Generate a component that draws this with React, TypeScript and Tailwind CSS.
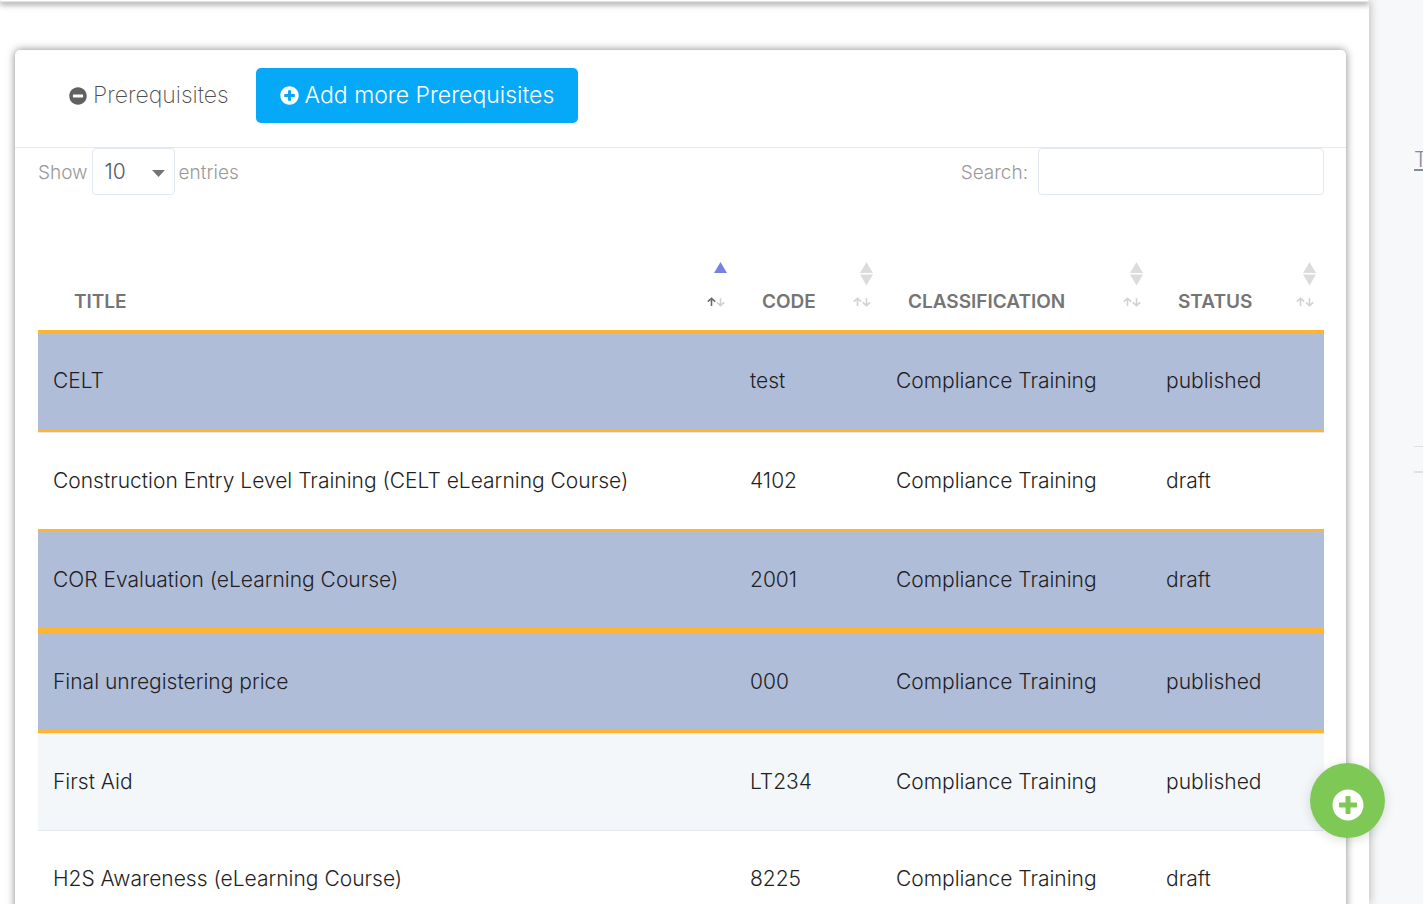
import { FaMinusCircle, FaPlusCircle } from "react-icons/fa";

type Course = {
  title: string;
  code: string;
  classification: string;
  status: string;
  selected?: boolean;
};

const courses: Course[] = [
  { title: "CELT", code: "test", classification: "Compliance Training", status: "published", selected: true },
  { title: "Construction Entry Level Training (CELT eLearning Course)", code: "4102", classification: "Compliance Training", status: "draft" },
  { title: "COR Evaluation (eLearning Course)", code: "2001", classification: "Compliance Training", status: "draft", selected: true },
  { title: "Final unregistering price", code: "000", classification: "Compliance Training", status: "published", selected: true },
  { title: "First Aid", code: "LT234", classification: "Compliance Training", status: "published" },
  { title: "H2S Awareness (eLearning Course)", code: "8225", classification: "Compliance Training", status: "draft" },
];

const columns = [
  { label: "Title", width: "", pad: "pl-9", sorted: true },
  { label: "Code", width: "w-[146px]", pad: "pl-[27px]", sorted: false },
  { label: "Classification", width: "w-[270px]", pad: "pl-[27px]", sorted: false },
  { label: "Status", width: "w-[173px]", pad: "pl-[27px]", sorted: false },
];

function SortMarks({ sorted }: { sorted: boolean }) {
  return (
    <span className="flex flex-col items-end gap-2">
      <svg width="13" height="24" viewBox="0 0 13 24" aria-hidden="true">
        <path d="M6.5 0L13 11H0z" fill={sorted ? "#7b80e0" : "#dcdcdc"} />
        {!sorted && <path d="M0 12.5h13L6.5 23.5z" fill="#dcdcdc" />}
      </svg>
      <span className="pr-[2px]">
        <svg width="18" height="16" viewBox="0 0 18 16" fill="none" strokeWidth="1.6" aria-hidden="true">
          <path d="M4.5 12V4.5M0.8 7.6L4.5 4.4L8.2 7.6" stroke={sorted ? "#6b6b6b" : "#d2d2d2"} />
          <path d="M13.5 4V11.5M9.8 8.4L13.5 11.6L17.2 8.4" stroke="#d2d2d2" />
        </svg>
      </span>
    </span>
  );
}

function rowStyle(course: Course, index: number) {
  if (course.selected) return "border-y-[3px] border-[#ffb52e] bg-[#b0bdd9]";
  return index % 2 === 0 ? "border-t border-[#e3e8ee] bg-[#f3f7fa]" : "border-t border-[#e3e8ee] bg-white";
}

export default function App() {
  return (
    <div className="flex h-screen overflow-hidden bg-[#f7f8fa] font-['Inter','Noto_Sans',sans-serif] font-light">
      <main className="z-10 min-w-0 flex-1 overflow-hidden bg-white shadow-[0_0_10px_rgba(0,0,0,0.3)]">
        <section className="h-[2px] rounded-b-md border-b border-[#dfe5ec] bg-white shadow-[0_1px_6px_1px_rgba(0,0,0,0.5)]" />
        <section className="mt-12 mr-[23px] ml-[15px] rounded-[5px] bg-white shadow-[0_0_8px_rgba(0,0,0,0.48)]">
          <header className="flex items-start gap-[3px] border-b border-[#e3e8ec] pt-[18px] pb-6 pl-[30px]">
            <button type="button" className="flex h-[55px] items-center gap-[6px] px-6 text-[23px] font-extralight text-[#4f4f4f]">
              <FaMinusCircle size={18} color="#616161" />
              Prerequisites
            </button>
            <button type="button" className="flex h-[55px] items-center gap-[6px] rounded-[5px] bg-[#06a9f8] px-6 text-[23px] text-white">
              <FaPlusCircle size={19} />
              Add more Prerequisites
            </button>
          </header>
          <div className="pr-[22px] pl-[23px]">
            <div className="flex items-center justify-between text-[19px] text-[#999999]">
              <label className="flex items-center gap-1">
                <span className="pt-[3px]">Show</span>
                <span className="relative">
                  <select className="h-[47px] w-[83px] appearance-none rounded-[4px] border border-[#e1e8ef] bg-white pl-3 text-[21px] text-[#4f5a68]">
                    <option>10</option>
                    <option>25</option>
                    <option>50</option>
                  </select>
                  <svg className="pointer-events-none absolute top-[22px] right-[10px]" width="13" height="7" viewBox="0 0 13 7" aria-hidden="true">
                    <path d="M0 0h13L6.5 7z" fill="#757575" />
                  </svg>
                </span>
                <span className="pt-[3px]">entries</span>
              </label>
              <label className="flex items-center gap-[10px]">
                <span className="pt-[3px]">Search:</span>
                <input type="search" className="h-[47px] w-[286px] rounded-[4px] border border-[#e1e8ef] bg-white px-3 outline-none" />
              </label>
            </div>
            <table className="mt-[67px] w-full table-fixed border-separate border-spacing-0 text-left">
              <thead>
                <tr>
                  {columns.map((c) => (
                    <th key={c.label} scope="col" className={`${c.width} ${c.pad} p-0 pb-5 text-[19px] leading-4 font-semibold text-[#757575]`}>
                      <button type="button" className="flex w-full items-end justify-between pr-2 text-left uppercase">
                        {c.label}
                        <SortMarks sorted={c.sorted} />
                      </button>
                    </th>
                  ))}
                </tr>
              </thead>
              <tbody>
                {courses.map((course, i) => (
                  <tr key={course.code} className="text-[21px] leading-6 whitespace-nowrap text-[#1f1f24]">
                    {[course.title, course.code, course.classification, course.status].map((text, n) => (
                      <td key={n} className={`${rowStyle(course, i)} px-[15px] py-9`}>
                        {text}
                      </td>
                    ))}
                  </tr>
                ))}
              </tbody>
            </table>
          </div>
        </section>
      </main>
      <aside className="w-[54px] shrink-0 overflow-hidden pt-[146px] pl-[45px]">
        <a href="#" className="block text-[21px] leading-7 text-[#7f8d9c] underline decoration-2 underline-offset-2">
          T
        </a>
        <div className="mt-[272px] h-[27px] border-t border-b-2 border-[#dedfe1]" />
      </aside>
      <button
        type="button"
        aria-label="Add"
        className="fixed right-[38px] bottom-[66px] z-20 flex size-[75px] items-center justify-center rounded-full bg-[#7ec855] pt-[9px] text-white shadow-[0_2px_12px_rgba(0,0,0,0.14)]"
      >
        <FaPlusCircle size={32} />
      </button>
    </div>
  );
}
